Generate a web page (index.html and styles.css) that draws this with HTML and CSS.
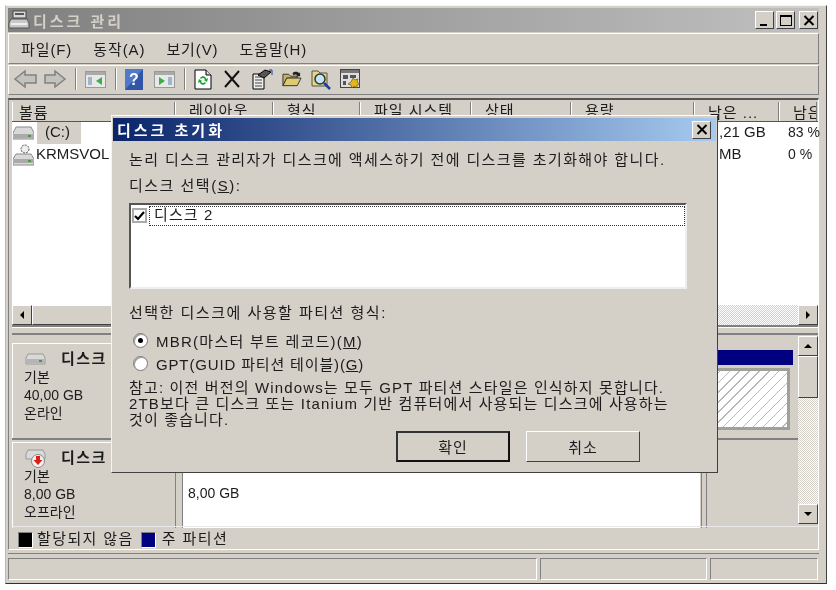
FILE: index.html
```html
<!DOCTYPE html>
<html lang="ko">
<head>
  <meta charset="UTF-8">
  <title>디스크 관리</title>
  <link rel="stylesheet" href="styles.css">
</head>
<body>
  <div class="window">
    <div class="titlebar">
      <svg class="app-icon" width="22" height="20" viewBox="0 0 22 20">
        <rect x="5" y="1" width="13" height="7" fill="#d8d8d8" stroke="#444"/>
        <rect x="7" y="3" width="9" height="2" fill="#555"/>
        <path d="M3 9h16l2 4v5H1v-5z" fill="#c8c8c8" stroke="#555"/>
        <rect x="3" y="13" width="16" height="2" fill="#eee"/>
      </svg>
      <span class="title-text">디스크 관리</span>
      <div class="caption-btns">
        <div class="cap-btn"><span class="cap-min"></span></div>
        <div class="cap-btn"><span class="cap-max"></span></div>
        <div class="cap-btn close-gap">
          <svg width="12" height="11" viewBox="0 0 12 11"><path d="M1.5 1l9 9M10.5 1l-9 9" stroke="#000" stroke-width="2"/></svg>
        </div>
      </div>
    </div>

    <div class="menubar bar">
      <span>파일(F)</span><span>동작(A)</span><span>보기(V)</span><span>도움말(H)</span>
    </div>

    <div class="toolbar bar">
      <svg class="tb-group" width="54" height="22" viewBox="0 0 54 22">
        <path d="M1 11l10-8v4h11v8H11v4z" fill="#c4c2bc" stroke="#808080" stroke-width="1.5"/>
        <path d="M51 11l-10-8v4H31v8h10v4z" fill="#c4c2bc" stroke="#808080" stroke-width="1.5"/>
      </svg>
      <i class="tb-sep"></i>
      <svg width="22" height="20" viewBox="0 0 22 20">
        <rect x=".5" y="2.5" width="20" height="16" fill="#e8e8e8" stroke="#999"/>
        <rect x="1" y="3" width="19" height="3" fill="#aaa"/>
        <path d="M3 8h4v8H3z" fill="#9fb6c8"/>
        <path d="M17 8v8l-6-4z" fill="#3fae49"/>
      </svg>
      <i class="tb-sep"></i>
      <svg width="18" height="21" viewBox="0 0 18 21">
        <rect width="18" height="21" fill="#2f56a8"/>
        <path d="M0 0h18L0 21z" fill="#5079c8"/>
        <text x="9" y="16" class="svg-q">?</text>
      </svg>
      <svg class="tb-gap" width="22" height="20" viewBox="0 0 22 20">
        <rect x=".5" y="2.5" width="20" height="16" fill="#e8e8e8" stroke="#999"/>
        <rect x="1" y="3" width="19" height="3" fill="#aaa"/>
        <path d="M14 8h4v8h-4z" fill="#9fb6c8"/>
        <path d="M5 8v8l6-4z" fill="#3fae49"/>
      </svg>
      <i class="tb-sep"></i>
      <svg width="18" height="21" viewBox="0 0 18 21">
        <path d="M1 1h11l5 5v14H1z" fill="#fff" stroke="#000"/>
        <path d="M12 1v5h5" fill="#ddd" stroke="#000"/>
        <path d="M6 9c2-3 6-2 6 1l2-1-1 4-3-2 1-.5c-1-2-3-2-4-.5zM12 14c-2 3-6 2-6-1l-2 1 1-4 3 2-1 .5c1 2 3 2 4 .5z" fill="#16a02c"/>
      </svg>
      <svg class="tb-gap2" width="18" height="18" viewBox="0 0 18 18"><path d="M2 1l14 16M16 1L2 17" stroke="#111" stroke-width="2"/></svg>
      <svg class="tb-gap2" width="21" height="21" viewBox="0 0 21 21">
        <path d="M1 5h11v15H1z" fill="#eee" stroke="#000"/>
        <path d="M3 8h7M3 11h7M3 14h7M3 17h7" stroke="#444"/>
        <path d="M6 6l7-5 6 2-7 6z" fill="#555" stroke="#000"/>
        <path d="M17 1h3v5" fill="none" stroke="#1b3fa0"/>
      </svg>
      <svg class="tb-gap3" width="20" height="18" viewBox="0 0 21 18">
        <path d="M1 4h6l2 2h7v2H5L1 16z" fill="#c9b458" stroke="#333"/>
        <path d="M5 8h15l-4 8H1z" fill="#dccb70" stroke="#333"/>
        <path d="M11 3c2-2 5-2 7 0l1-1v4h-4l1-1c-1-1-3-1-4 0z" fill="#222"/>
      </svg>
      <svg class="tb-gap3" width="20" height="21" viewBox="0 0 20 21">
        <path d="M1 2h6l2 2h7v13H1z" fill="#e6d680" stroke="#555"/>
        <circle cx="9" cy="10" r="5" fill="#bfe6f4" stroke="#333" stroke-width="1.5"/>
        <path d="M13 14l6 6" stroke="#1b3fa0" stroke-width="2.5"/>
      </svg>
      <svg class="tb-gap3" width="21" height="21" viewBox="0 0 21 21">
        <rect x=".5" y=".5" width="19" height="18" fill="#ddd" stroke="#444"/>
        <rect x="1" y="1" width="18" height="3" fill="#777"/>
        <path d="M3 6h5v4H3zM3 12h3v4H3zM10 6h6v3h-6z" fill="#555"/>
        <path d="M13 9l2 2 3-1-1 3 3 2-3 1v3l-3-2-2 2-1-3-3-1 3-2z" fill="#e2b81e" stroke="#554400" stroke-width=".6"/>
      </svg>
    </div>

    <div class="pane">
      <div class="grid-head cols">
        <div class="hcell head-main">볼륨</div>
        <div class="hcell">레이아웃</div>
        <div class="hcell">형식</div>
        <div class="hcell">파일 시스템</div>
        <div class="hcell">상태</div>
        <div class="hcell">용량</div>
        <div class="hcell head-low">남은 ...</div>
        <div class="hcell head-low">남은</div>
      </div>
      <div class="vol-list">
        <div class="vol-row cols">
          <div class="vol-name">
            <svg width="21" height="14" viewBox="0 0 21 14">
              <path d="M3 1h15l3 6v6H0V7z" fill="#d9d9d9" stroke="#8a8a8a"/>
              <rect x="1" y="8" width="19" height="4" fill="#aaa"/>
              <rect x="15" y="9" width="3" height="2" fill="#4c9a3a"/>
            </svg>
            <span class="selected-name">(C:)</span>
          </div>
          <div></div><div></div><div></div><div></div><div></div>
          <div class="free">,21 GB</div>
          <div class="pct">83 %</div>
        </div>
        <div class="vol-row cols">
          <div class="vol-name">
            <svg width="21" height="22" viewBox="0 0 21 22">
              <circle cx="12" cy="5" r="4" fill="#eee" stroke="#555" stroke-dasharray="2 1"/>
              <path d="M3 10h15l3 5v6H0v-6z" fill="#d9d9d9" stroke="#8a8a8a"/>
              <rect x="1" y="15" width="19" height="4" fill="#aaa"/>
              <rect x="15" y="16" width="3" height="2" fill="#4c9a3a"/>
            </svg>
            <span class="vol-text">KRMSVOL</span>
          </div>
          <div></div><div></div><div></div><div></div><div></div>
          <div class="free">MB</div>
          <div class="pct">0 %</div>
        </div>
      </div>
      <div class="hscroll">
        <div class="sbtn"><i class="arrow left"></i></div>
        <div class="sthumb"></div>
        <div class="strack"></div>
        <div class="sbtn"><i class="arrow right"></i></div>
      </div>
      <div class="splitter"></div>
      <div class="lower">
        <div class="disks">
          <div class="disk-row first">
            <div class="disk-label">
              <div class="disk-name">
                <svg width="21" height="12" viewBox="0 0 21 12">
                  <path d="M3 1h15l2 4v6H1V5z" fill="#d9d9d9" stroke="#999"/>
                  <rect x="2" y="6" width="17" height="4" fill="#b5b5b5"/>
                  <rect x="14" y="7" width="3" height="2" fill="#4c9a3a"/>
                </svg>
                <b>디스크 0</b>
              </div>
              <div>기본</div>
              <div>40,00 GB</div>
              <div>온라인</div>
            </div>
            <div class="disk-gutter"></div>
            <div class="partition">
              <div class="part-head"></div>
              <div class="part-body"></div>
            </div>
          </div>
          <div class="disk-row second">
            <div class="disk-label">
              <div class="disk-name">
                <svg width="21" height="19" viewBox="0 0 21 19">
                  <path d="M3 1h15l2 4v5H1V5z" fill="#d9d9d9" stroke="#999"/>
                  <circle cx="13" cy="12" r="6.500" fill="#f4eeee" stroke="#888"/>
                  <path d="M11 7h4v4h2.500l-4.500 5-4.500-5H11z" fill="#d8201c"/>
                </svg>
                <b>디스크 1</b>
              </div>
              <div>기본</div>
              <div>8,00 GB</div>
              <div>오프라인</div>
            </div>
            <div class="disk-gutter"></div>
            <div class="unknown">8,00 GB</div>
            <div class="rest"></div>
          </div>
        </div>
        <div class="vscroll">
          <div class="sbtn"><i class="arrow up"></i></div>
          <div class="vthumb"></div>
          <div class="vtrack"></div>
          <div class="sbtn"><i class="arrow down"></i></div>
        </div>
      </div>
      <div class="legend">
        <i class="swatch black"></i><span>할당되지 않음</span>
        <i class="swatch navy"></i><span>주 파티션</span>
      </div>
    </div>

    <div class="statusbar">
      <div class="status-cell s1"></div>
      <div class="status-cell s2"></div>
      <div class="status-cell s3"></div>
    </div>
  </div>

  <div class="dialog">
    <div class="dlg-title">
      <span>디스크 초기화</span>
      <div class="cap-btn">
        <svg width="12" height="11" viewBox="0 0 12 11"><path d="M1.500 1l9 9M10.500 1l-9 9" stroke="#000" stroke-width="2"/></svg>
      </div>
    </div>
    <div class="dlg-body">
      <p class="line intro">논리 디스크 관리자가 디스크에 액세스하기 전에 디스크를 초기화해야 합니다.</p>
      <p class="line select-label">디스크 선택(<u>S</u>):</p>
      <div class="listbox">
        <div class="list-item">
          <span class="check">
            <svg width="11" height="10" viewBox="0 0 11 10"><path d="M1 5l3 3 6-7" fill="none" stroke="#000" stroke-width="2.200"/></svg>
          </span>
          <span class="item-text">디스크 2</span>
        </div>
      </div>
      <p class="line type-label">선택한 디스크에 사용할 파티션 형식:</p>
      <div class="radios">
        <div class="radio-row"><i class="radio on"></i><span class="mbr">MBR(마스터 부트 레코드)(<u>M</u>)</span></div>
        <div class="radio-row"><i class="radio"></i><span class="gpt">GPT(GUID 파티션 테이블)(<u>G</u>)</span></div>
      </div>
      <p class="note">참고: 이전 버전의 Windows는 모두 GPT 파티션 스타일은 인식하지 못합니다.<br>2TB보다 큰 디스크 또는 Itanium 기반 컴퓨터에서 사용되는 디스크에 사용하는<br>것이 좋습니다.</p>
      <div class="buttons">
        <button class="btn default">확인</button>
        <button class="btn">취소</button>
      </div>
    </div>
  </div>
</body>
</html>
```
FILE: styles.css
```css
:root {
  --face: #d4d0c8;
  --dark: #808080;
  --darker: #404040;
}

* {
  box-sizing: border-box;
  margin: 0;
  padding: 0;
}

html, body {
  width: 836px;
  height: 590px;
  overflow: hidden;
  background: #fff;
}

body {
  position: relative;
  padding: 5px 0 0 5px;
  font-family: "Liberation Sans", "Noto Sans CJK KR", sans-serif;
  font-size: 15px;
  color: #1c1c1c;
}

.window,
.dialog {
  filter: blur(.4px);
}

.window {
  width: 822px;
  height: 579px;
  background: var(--face);
  border: 1px solid;
  border-color: #f4f4f4 var(--darker) #303030 #b8b8b8;
  padding: 2px 7px 2px 2px;
  display: flex;
  flex-direction: column;
}

.titlebar {
  height: 24px;
  flex: none;
  display: flex;
  align-items: center;
  background: linear-gradient(90deg, #808080, #c0c0c0);
}

.app-icon {
  margin-right: 3px;
}

.title-text {
  font-weight: 700;
  color: #d4d0c8;
  letter-spacing: 3px;
}

.caption-btns {
  margin-left: auto;
  display: flex;
  gap: 2px;
  padding-right: 1px;
}

.cap-btn {
  width: 19px;
  height: 18px;
  background: var(--face);
  border: 1px solid;
  border-color: #fff var(--darker) var(--darker) #fff;
  display: flex;
  align-items: center;
  justify-content: center;
}

.close-gap {
  margin-left: 2px;
}

.cap-min {
  width: 7px;
  height: 2px;
  background: #000;
  margin-top: 9px;
  margin-right: 3px;
}

.cap-max {
  width: 12px;
  height: 11px;
  border: 1px solid #000;
  border-top-width: 2px;
}

.bar {
  flex: none;
  border: 1px solid;
  border-color: #fff var(--dark) var(--dark) #fff;
  display: flex;
  align-items: center;
}

.menubar {
  height: 31px;
  margin-top: 1px;
  padding-left: 12px;
  gap: 21px;
  letter-spacing: .9px;
}

.toolbar {
  height: 30px;
  margin-top: 1px;
  padding-left: 5px;
  padding-bottom: 2px;
}

.tb-group {
  margin-right: -1px;
}

.tb-sep {
  width: 2px;
  height: 22px;
  margin: 0 8px;
  background: var(--dark);
  border-right: 1px solid #fff;
}

.tb-gap {
  margin-left: 11px;
}

.tb-gap2 {
  margin-left: 11px;
}

.tb-gap3 {
  margin-left: 9px;
}

.svg-q {
  font-family: "Liberation Sans", sans-serif;
  font-size: 16px;
  font-weight: 700;
  fill: #fff;
  text-anchor: middle;
}

.pane {
  flex: none;
  height: 452px;
  margin-top: 3px;
  border: 1px solid;
  border-color: #555 #fff #fff var(--dark);
  border-top-width: 2px;
  padding: 2px 0 0 3px;
  display: flex;
  flex-direction: column;
}

.cols {
  display: grid;
  grid-template-columns: 163px 98px 87px 111px 100px 123px 85px 38px;
}

.grid-head {
  height: 20px;
  flex: none;
  overflow: hidden;
  border-bottom: 1px solid #555;
}

.hcell {
  border-right: 1px solid var(--dark);
  border-left: 1px solid #fff;
  padding-left: 13px;
  line-height: 18px;
  height: 17px;
  letter-spacing: 1px;
  white-space: nowrap;
  overflow: hidden;
}

.head-main {
  height: 19px;
  padding-left: 6px;
  line-height: 21px;
}

.head-low {
  height: 19px;
  line-height: 21px;
}

.vol-list {
  height: 183px;
  flex: none;
  background: #fff;
}

.vol-row {
  height: 22px;
  white-space: nowrap;
  line-height: 20px;
}

.vol-name {
  display: flex;
  align-items: center;
  gap: 2px;
  padding-left: 1px;
  overflow: hidden;
}

.selected-name {
  background: var(--face);
  width: 44px;
  height: 22px;
  padding-left: 8px;
  margin-left: 1px;
}

.vol-text {
  height: 22px;
}

.free {
  padding-left: 25px;
}

.pct {
  padding-left: 9px;
  font-size: 14px;
}

.hscroll {
  height: 20px;
  flex: none;
  display: flex;
}

.sbtn {
  width: 20px;
  height: 20px;
  flex: none;
  background: var(--face);
  border: 1px solid;
  border-color: #fff var(--darker) var(--darker) #fff;
  display: flex;
  align-items: center;
  justify-content: center;
}

.arrow {
  width: 0;
  height: 0;
  border: 4px solid transparent;
}

.arrow.left { border-right-color: #000; border-left-width: 0; }
.arrow.right { border-left-color: #000; border-right-width: 0; }
.arrow.up { border-bottom-color: #000; border-top-width: 0; }
.arrow.down { border-top-color: #000; border-bottom-width: 0; }

.sthumb {
  width: 680px;
  background: var(--face);
  border: 1px solid;
  border-color: #fff var(--darker) var(--darker) #fff;
}

.strack,
.vtrack {
  flex: 1;
  background: repeating-conic-gradient(#fff 0 25%, var(--face) 0 50%) 0 0 / 2px 2px;
}

.splitter {
  height: 10px;
  flex: none;
  border-top: 2px solid var(--dark);
  border-bottom: 2px solid var(--dark);
  box-shadow: inset 0 1px 0 #fff;
}

.lower {
  height: 191px;
  flex: none;
  display: flex;
}

.disks {
  flex: 1;
  min-width: 0;
  padding-top: 8px;
}

.disk-row {
  display: flex;
}

.first {
  height: 97px;
  border-bottom: 2px solid var(--dark);
}

.second {
  height: 86px;
  margin-top: 2px;
}

.disk-label {
  width: 163px;
  flex: none;
  padding-left: 11px;
  font-size: 14px;
  line-height: 18px;
  border-top: 1px solid #fff;
  border-left: 1px solid #fff;
}

.disk-name {
  display: flex;
  align-items: center;
  height: 24px;
  padding-top: 6px;
  gap: 15px;
  padding-left: 1px;
}

.disk-name b {
  letter-spacing: 1.5px;
  font-size: 15px;
}

.disk-gutter {
  width: 8px;
  flex: none;
  border-left: 1px solid var(--dark);
  border-right: 1px solid var(--dark);
}

.partition {
  width: 610px;
  flex: none;
  padding-top: 7px;
}

.part-head {
  height: 15px;
  background: #000080;
}

.part-body {
  height: 62px;
  margin: 3px 3px 0 0;
  border: 3px solid #a0a09a;
  background: repeating-linear-gradient(135deg, #fff 0 6px, #b8b8b8 6px 7px);
}

.unknown {
  width: 517px;
  flex: none;
  margin-top: 31px;
  height: 55px;
  background: #fff;
  font-size: 14px;
  padding: 12px 0 0 5px;
}

.rest {
  width: 6px;
  border-left: 1px solid var(--dark);
  border-right: 1px solid var(--dark);
  margin-left: 1px;
}

.vscroll {
  width: 20px;
  flex: none;
  display: flex;
  flex-direction: column;
  margin: 1px 0 2px;
}

.vthumb {
  height: 42px;
  flex: none;
  background: var(--face);
  border: 1px solid;
  border-color: #fff var(--darker) var(--darker) #fff;
}

.legend {
  flex: 1;
  display: flex;
  align-items: center;
  padding-left: 6px;
  border-top: 1px solid #e8e8e8;
  letter-spacing: 1.4px;
}

.legend span {
  margin-bottom: 5px;
}

.swatch {
  width: 15px;
  height: 16px;
  border: 1px solid;
  border-color: var(--dark) #fff #fff var(--dark);
  margin-right: 4px;
}

.swatch.black { background: #000; }
.swatch.navy { background: #000080; margin-left: 7px; margin-right: 6px; }

.statusbar {
  flex: 1;
  display: flex;
  gap: 3px;
  padding-top: 4px;
  border-top: 1px solid var(--dark);
  margin-top: 3px;
}

.status-cell {
  height: 22px;
  border: 1px solid;
  border-color: var(--dark) #fff #fff var(--dark);
}

.s1 { width: 529px; }
.s2 { width: 167px; }
.s3 { width: 108px; }

/* dialog sits over the window */
.dialog {
  position: absolute;
  left: 111px;
  top: 115px;
  width: 607px;
  height: 358px;
  background: var(--face);
  border: 1px solid;
  border-color: #fff #404040 #404040 #f4f4f4;
  padding: 2px 1px 0 1px;
}

.dlg-title {
  height: 23px;
  display: flex;
  align-items: center;
  justify-content: space-between;
  padding: 0 5px 0 4px;
  background: linear-gradient(90deg, #0a246a, #a6caf0);
  color: #fff;
  font-weight: 700;
  letter-spacing: 3px;
}

.dlg-body {
  padding: 10px 0 0 16px;
}

.line {
  line-height: 18px;
  white-space: nowrap;
}

.intro {
  letter-spacing: 1.4px;
}

.select-label {
  margin-top: 8px;
  letter-spacing: 1.5px;
}

.listbox {
  width: 558px;
  height: 86px;
  margin-top: 8px;
  background: #fff;
  border: 2px solid;
  border-color: #555 #eee #eee #555;
  padding: 0 0 0 1px;
}

.list-item {
  display: flex;
  align-items: center;
  height: 21px;
}

.check {
  width: 15px;
  height: 15px;
  border: 2px solid #aaa;
  display: flex;
  align-items: center;
  justify-content: center;
  flex: none;
}

.item-text {
  flex: 1;
  height: 20px;
  margin-left: 2px;
  padding-left: 4px;
  line-height: 16px;
  letter-spacing: 1.1px;
  border: 1px dotted #333;
}

.type-label {
  margin-top: 15px;
  letter-spacing: 1.5px;
}

.radios {
  margin-top: 7px;
  padding-left: 4px;
}

.radio-row {
  display: flex;
  align-items: center;
  height: 23px;
  gap: 8px;
}

.mbr {
  letter-spacing: 1.25px;
}

.gpt {
  letter-spacing: .85px;
}

.radio {
  width: 15px;
  height: 15px;
  border-radius: 50%;
  background: #fff;
  border: 1px solid #777;
  box-shadow: inset 1px 1px 0 #999;
  display: flex;
  align-items: center;
  justify-content: center;
}

.radio.on::after {
  content: "";
  width: 5px;
  height: 5px;
  border-radius: 50%;
  background: #000;
}

.note {
  margin-top: 5px;
  line-height: 16px;
  letter-spacing: 1.15px;
  white-space: nowrap;
}

.buttons {
  display: flex;
  justify-content: flex-end;
  gap: 16px;
  margin-top: 3px;
  padding-right: 76px;
}

.btn {
  width: 114px;
  height: 31px;
  background: var(--face);
  font: inherit;
  color: inherit;
  letter-spacing: 1px;
  border: 1px solid;
  border-color: #fff var(--darker) var(--darker) #fff;
}

.btn.default {
  border: 2px solid;
  border-color: #333 #111 #111 #333;
}
```
